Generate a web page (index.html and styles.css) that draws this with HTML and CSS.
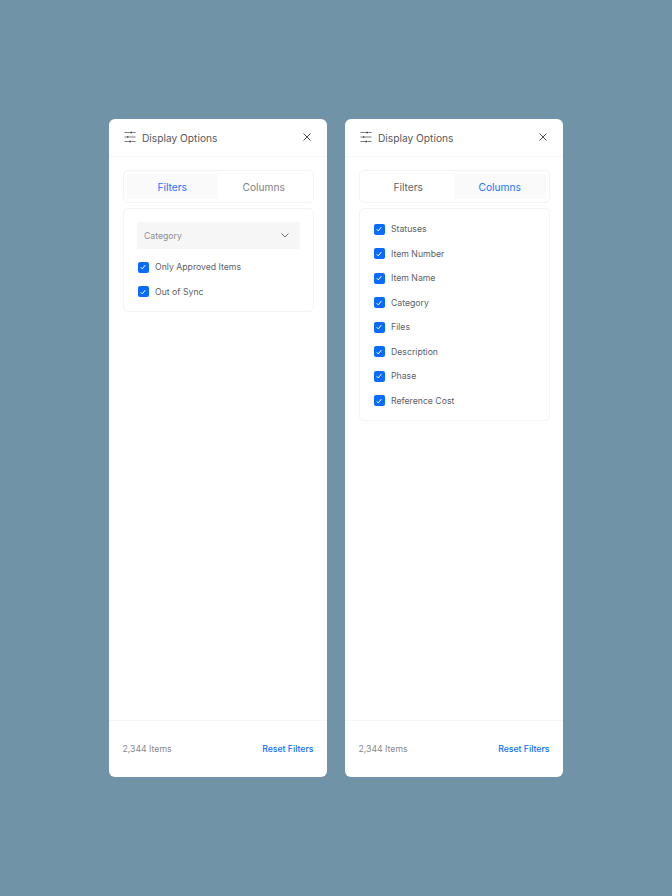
FILE: index.html
```html
<!DOCTYPE html>
<html lang="en">
<head>
<meta charset="utf-8">
<title>Display Options</title>
<link rel="stylesheet" href="styles.css">
</head>
<body>
<main class="stage">
  <section class="panel">
    <header class="head">
      <svg class="sliders" viewBox="0 0 12 12" aria-hidden="true"><path d="M.5 1.5h5.4M8.4 1.5h3.1M.5 6h1.9M4.9 6h6.6M.5 10.5h4.4M7.4 10.5h4.1"/><path class="knob" d="M6.2 1.5h1.9M2.7 6h1.9M5.2 10.5h1.9"/></svg>
      <h2 class="title">Display Options</h2>
      <svg class="close" viewBox="0 0 8 8" aria-hidden="true"><path d="M.5.5l7 7M7.5.5l-7 7"/></svg>
    </header>
    <div class="body">
      <div class="tabs">
        <div class="tab active">Filters</div>
        <div class="tab">Columns</div>
      </div>
      <div class="card filters">
        <div class="select"><span>Category</span><svg class="chev" viewBox="0 0 8 5" aria-hidden="true"><path d="M.5.5L4 4 7.5.5"/></svg></div>
        <div class="opts">
          <label class="opt"><span class="box"><svg viewBox="0 0 8 8"><path d="M1.7 4.2l1.6 1.7 3-3.8"/></svg></span>Only Approved Items</label>
          <label class="opt"><span class="box"><svg viewBox="0 0 8 8"><path d="M1.7 4.2l1.6 1.7 3-3.8"/></svg></span>Out of Sync</label>
        </div>
      </div>
    </div>
    <footer class="foot"><span class="count">2,344 Items</span><a class="reset">Reset Filters</a></footer>
  </section>
  <section class="panel">
    <header class="head">
      <svg class="sliders" viewBox="0 0 12 12" aria-hidden="true"><path d="M.5 1.5h5.4M8.4 1.5h3.1M.5 6h1.9M4.9 6h6.6M.5 10.5h4.4M7.4 10.5h4.1"/><path class="knob" d="M6.2 1.5h1.9M2.7 6h1.9M5.2 10.5h1.9"/></svg>
      <h2 class="title">Display Options</h2>
      <svg class="close" viewBox="0 0 8 8" aria-hidden="true"><path d="M.5.5l7 7M7.5.5l-7 7"/></svg>
    </header>
    <div class="body">
      <div class="tabs">
        <div class="tab plain">Filters</div>
        <div class="tab active">Columns</div>
      </div>
      <div class="card columns">
        <label class="opt"><span class="box"><svg viewBox="0 0 8 8"><path d="M1.7 4.2l1.6 1.7 3-3.8"/></svg></span>Statuses</label>
        <label class="opt"><span class="box"><svg viewBox="0 0 8 8"><path d="M1.7 4.2l1.6 1.7 3-3.8"/></svg></span>Item Number</label>
        <label class="opt"><span class="box"><svg viewBox="0 0 8 8"><path d="M1.7 4.2l1.6 1.7 3-3.8"/></svg></span>Item Name</label>
        <label class="opt"><span class="box"><svg viewBox="0 0 8 8"><path d="M1.7 4.2l1.6 1.7 3-3.8"/></svg></span>Category</label>
        <label class="opt"><span class="box"><svg viewBox="0 0 8 8"><path d="M1.7 4.2l1.6 1.7 3-3.8"/></svg></span>Files</label>
        <label class="opt"><span class="box"><svg viewBox="0 0 8 8"><path d="M1.7 4.2l1.6 1.7 3-3.8"/></svg></span>Description</label>
        <label class="opt"><span class="box"><svg viewBox="0 0 8 8"><path d="M1.7 4.2l1.6 1.7 3-3.8"/></svg></span>Phase</label>
        <label class="opt"><span class="box"><svg viewBox="0 0 8 8"><path d="M1.7 4.2l1.6 1.7 3-3.8"/></svg></span>Reference Cost</label>
      </div>
    </div>
    <footer class="foot"><span class="count">2,344 Items</span><a class="reset">Reset Filters</a></footer>
  </section>
</main>
</body>
</html>
```
FILE: styles.css
```css
* { box-sizing: border-box; }
html, body { margin: 0; height: 100%; }
body {
  background: #7093a7;
  font-family: Inter, "Liberation Sans", sans-serif;
  color: #555a60;
}
.stage {
  height: 896px;
  display: flex;
  justify-content: center;
  align-items: center;
  gap: 18px;
}
.panel {
  width: 218px;
  height: 658px;
  background: #fff;
  border-radius: 6px;
  display: flex;
  flex-direction: column;
}
.head {
  height: 38px;
  flex: none;
  display: flex;
  align-items: center;
  padding: 0 16.5px 1px 14.5px;
  border-bottom: 1px solid #f5f6fa;
}
.sliders { width: 12px; height: 12px; flex: none; margin-right: 6.5px; }
.sliders path { fill: none; stroke: #6a6d72; stroke-width: .9; }
.sliders .knob { stroke: #3a3c40; stroke-width: 1.5; }
.title { flex: 1; margin: 0; padding-top: 1px; font-size: 10.2px; line-height: 14px; font-weight: 400; color: #55585d; }
.close { width: 8px; height: 8px; flex: none; }
.close path { fill: none; stroke: #4a4d52; stroke-width: 1; }
.body { flex: 1; padding: 13px 13.5px 0; display: flex; flex-direction: column; gap: 5px; }
.tabs {
  height: 33px;
  display: flex;
  padding: 3px;
  border: 1px solid #f3f4f9;
  border-radius: 5px;
}
.tab {
  flex: 1;
  display: flex;
  align-items: center;
  justify-content: center;
  padding-top: 1px;
  font-size: 10.2px;
  color: #7f8389;
}
.tab.plain { color: #5c5f64; }
.tab.active { background: #fafafb; color: #1a75ff; }
.card { border: 1px solid #f3f4f9; border-radius: 5px; }
.card.filters { height: 104px; padding: 13px; }
.card.columns { height: 213px; padding: 8px 14px; display: flex; flex-direction: column; }
.select {
  height: 27px;
  background: #f6f6f7;
  border-radius: 2px;
  padding: 0 11px 0 7.5px;
  display: flex;
  align-items: center;
  justify-content: space-between;
  font-size: 8.7px;
  color: #8a8d92;
}
.chev { width: 8px; height: 5px; }
.chev path { fill: none; stroke: #6d7075; stroke-width: 1; }
.opts { margin-top: 6px; padding-left: 1px; display: flex; flex-direction: column; }
.opt { height: 24.5px; display: flex; align-items: center; gap: 6.5px; font-size: 8.7px; color: #5c5f64; flex: none; }
.box {
  width: 11px;
  height: 11px;
  background: #0a6cff;
  border-radius: 2px;
  display: flex;
  align-items: center;
  justify-content: center;
  flex: none;
}
.box svg { width: 8px; height: 8px; }
.box path { fill: none; stroke: #fff; stroke-width: 1; }
.foot {
  height: 57px;
  flex: none;
  border-top: 1px solid #f5f6fa;
  padding: 0 13.5px;
  display: flex;
  align-items: center;
  justify-content: space-between;
  font-size: 8.7px;
}
.count { color: #85888d; }
.reset { color: #0a6cff; font-weight: 500; }
```
